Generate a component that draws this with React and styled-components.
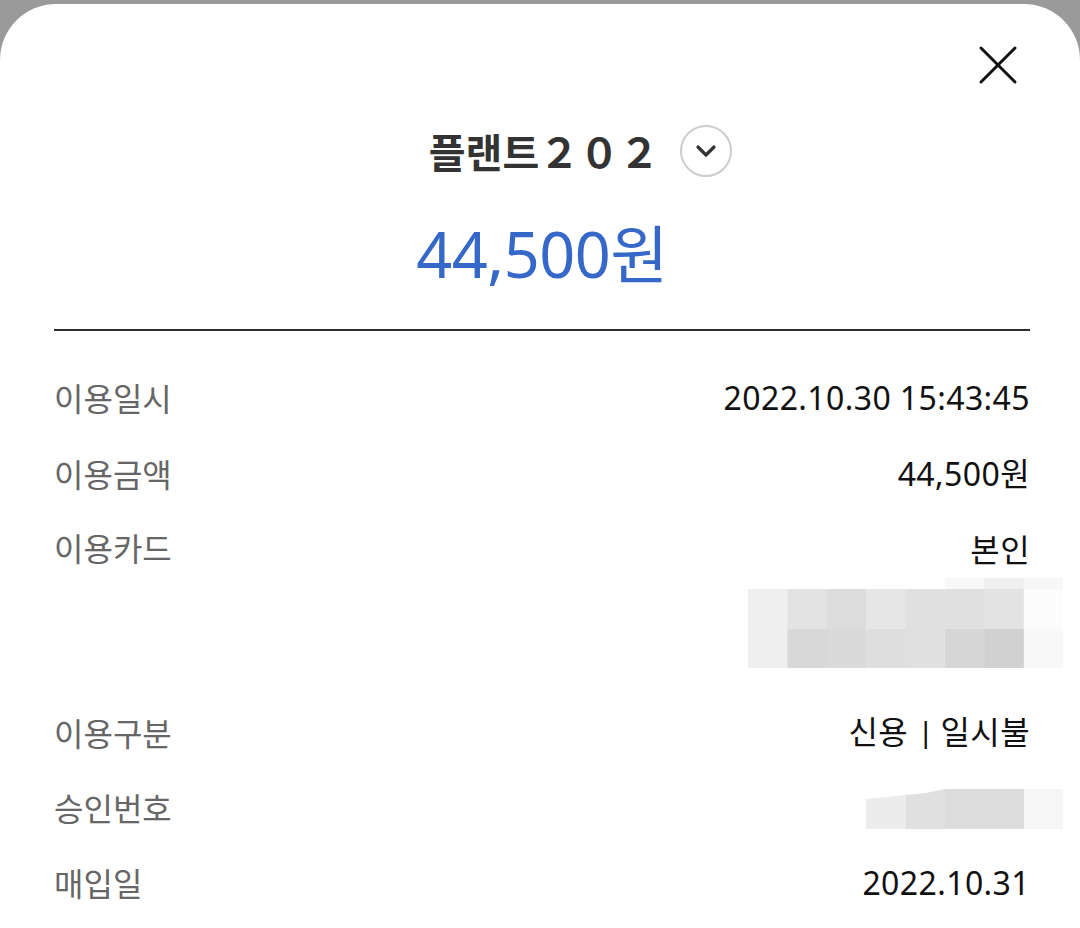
import React from "react";
import styled, { createGlobalStyle } from "styled-components";

const Global = createGlobalStyle`
  html, body { margin: 0; padding: 0; background: #9a9a9a; }
  body { font-family: "Noto Sans CJK KR", "Noto Sans", sans-serif; }
`;

const Page = styled.div`
  padding-top: 4px;
  min-height: 924px;
`;

const Sheet = styled.div`
  background: #fff;
  border-radius: 56px 56px 0 0;
  min-height: 924px;
  padding: 39px 50px 0 54px;
  box-sizing: border-box;
`;

const TopBar = styled.div`
  display: flex;
  justify-content: flex-end;
`;

const CloseButton = styled.button`
  width: 44px;
  height: 44px;
  margin-right: 10px;
  padding: 0;
  border: none;
  background: none;
  display: flex;
  align-items: center;
  justify-content: center;
`;

const TitleRow = styled.div`
  margin-top: 38px;
  height: 52px;
  display: grid;
  grid-template-columns: 1fr auto 1fr;
  align-items: center;
  column-gap: 21px;
  padding-left: 4px;
`;

const Title = styled.h1`
  grid-column: 2;
  margin: 0;
  font-size: 40px;
  font-weight: 700;
  color: #333;
  line-height: 52px;
`;

const ChevronButton = styled.button`
  grid-column: 3;
  justify-self: start;
  width: 52px;
  height: 52px;
  border-radius: 50%;
  border: 2px solid #cdcdcd;
  background: #fff;
  padding: 0;
  display: flex;
  align-items: center;
  justify-content: center;
  box-sizing: border-box;
`;

const Amount = styled.div`
  margin-top: 37px;
  text-align: center;
  font-family: "Noto Sans", "Noto Sans CJK KR", sans-serif;
  font-size: 63px;
  line-height: 80px;
  font-weight: 400;
  color: #3568c8;
  letter-spacing: -0.5px;
`;

const Divider = styled.hr`
  margin: 35px 0 29px;
  border: none;
  height: 2px;
  background: #2e2e2e;
`;

const Row = styled.div`
  display: flex;
  justify-content: space-between;
  align-items: ${(p) => (p.$top ? "flex-start" : "center")};
  padding: 16px 0 ${(p) => (p.$extra ? "26px" : "16px")};
`;

const Label = styled.div`
  font-size: 32px;
  line-height: 44px;
  color: #666;
  margin-top: -3px;
`;

const Value = styled.div`
  display: flex;
  flex-direction: column;
  align-items: flex-end;
  font-family: "Noto Sans", "Noto Sans CJK KR", sans-serif;
  font-size: 32px;
  line-height: 44px;
  letter-spacing: 0.4px;
  color: #111;
`;

const Sep = styled.span`
  font-size: 27px;
  font-weight: 500;
  margin: 0 7px 0 10px;
  position: relative;
  top: -2px;
`;

const Blur = styled.svg`
  display: block;
  margin-right: -33px;
  margin-top: ${(p) => p.$mt || 0}px;
`;

const cardTiles = [
  [null, null, null, null, null, "#f8f8f8", "#efefef", "#f7f7f7"],
  ["#efefef", "#e3e3e3", "#dcdcdc", "#e6e6e6", "#e0e0e0", "#e0e0e0", "#e3e3e3", "#fcfcfc"],
  ["#efefef", "#d8d8d8", "#dadada", "#dedede", "#e0e0e0", "#d6d6d6", "#d1d1d1", "#f8f8f8"],
];

function CardBlur() {
  const w = 39.4;
  const heights = [11, 40, 39];
  let y = 0;
  return (
    <Blur width="315" height="90" viewBox="0 0 315 90" $mt={6}>
      {cardTiles.map((row, r) => {
        const top = y;
        y += heights[r];
        return row.map((c, i) =>
          c ? <rect key={r + "-" + i} x={i * w} y={top} width={w + 0.5} height={heights[r] + 0.5} fill={c} /> : null
        );
      })}
    </Blur>
  );
}

function ApprovalBlur() {
  return (
    <Blur width="197" height="40" viewBox="0 0 197 40">
      <polygon points="0,10 40,6 40,40 0,40" fill="#ececec" />
      <polygon points="40,6 60,4 79,0 79,40 40,40" fill="#e0e0e0" />
      <rect x="79" y="0" width="79" height="40" fill="#dcdcdc" />
      <rect x="158" y="0" width="39" height="40" fill="#f6f6f6" />
    </Blur>
  );
}

const rows = [
  { label: "이용일시", value: "2022.10.30 15:43:45" },
  { label: "이용금액", value: "44,500원" },
  { label: "이용카드", value: "본인", card: true },
  {
    label: "이용구분",
    value: (
      <span>
        신용<Sep>|</Sep>일시불
      </span>
    ),
  },
  { label: "승인번호", approval: true },
  { label: "매입일", value: "2022.10.31" },
];

export default function App() {
  return (
    <Page>
      <Global />
      <Sheet>
        <TopBar>
          <CloseButton aria-label="닫기">
            <svg width="40" height="40" viewBox="0 0 40 40">
              <path d="M3 3 L37 37 M37 3 L3 37" stroke="#111" strokeWidth="3" strokeLinecap="round" />
            </svg>
          </CloseButton>
        </TopBar>
        <TitleRow>
          <Title>플랜트２０２</Title>
          <ChevronButton aria-label="더보기">
            <svg width="22" height="14" viewBox="0 0 22 14">
              <path d="M3 3 L11 11 L19 3" stroke="#333" strokeWidth="3.2" fill="none" strokeLinecap="round" strokeLinejoin="round" />
            </svg>
          </ChevronButton>
        </TitleRow>
        <Amount>44,500원</Amount>
        <Divider />
        {rows.map((r) => (
          <Row key={r.label} $top={r.card} $extra={r.card}>
            <Label>{r.label}</Label>
            <Value>
              {r.approval ? <ApprovalBlur /> : r.value}
              {r.card && <CardBlur />}
            </Value>
          </Row>
        ))}
      </Sheet>
    </Page>
  );
}
